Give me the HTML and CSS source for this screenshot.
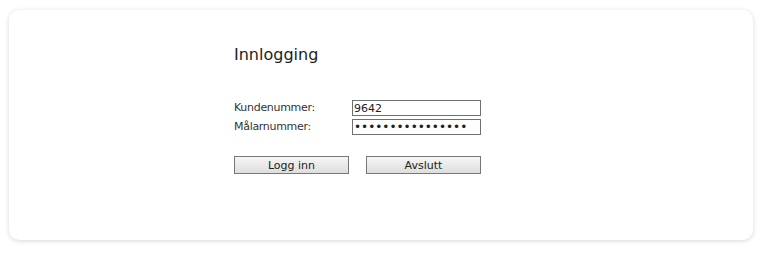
FILE: index.html
```html
<!DOCTYPE html>
<html lang="no">
<head>
<meta charset="utf-8">
<title>Innlogging</title>
<link rel="stylesheet" href="styles.css">
</head>
<body>
<div class="card">
  <div class="login">
    <h1 class="title">Innlogging</h1>
    <div class="fields">
      <label class="label" for="kunde">Kundenummer:</label>
      <input class="field" id="kunde" type="text" value="9642">
      <label class="label" for="maler">Målarnummer:</label>
      <input class="field field-pass" id="maler" type="password" value="1234567890123456">
    </div>
    <div class="buttons">
      <button class="btn" type="button">Logg inn</button>
      <button class="btn" type="button">Avslutt</button>
    </div>
  </div>
</div>
</body>
</html>
```
FILE: styles.css
```css
html, body {
  margin: 0;
  padding: 0;
  background: #ffffff;
}
body {
  padding: 10px 8px 13px 9px;
  font-family: "DejaVu Sans", Verdana, sans-serif;
  color: #222222;
}
.card {
  height: 230px;
  box-sizing: border-box;
  background: #ffffff;
  border-radius: 10px;
  box-shadow: 0 1px 5px rgba(0, 0, 0, 0.16);
  padding: 34px 0 0 225px;
}
.title {
  margin: 0;
  font-size: 16px;
  font-weight: normal;
  line-height: 22px;
  color: #222222;
}
.fields {
  margin-top: 34px;
  display: grid;
  grid-template-columns: 118px 129px;
  row-gap: 3px;
  align-items: center;
}
.label {
  font-size: 11px;
  letter-spacing: -0.3px;
  line-height: 16px;
  color: #333333;
}
.field {
  box-sizing: border-box;
  width: 129px;
  height: 16px;
  margin: 0;
  padding: 0 0 0 1px;
  border: 1px solid #707070;
  font-family: "DejaVu Sans", Verdana, sans-serif;
  font-size: 11px;
  color: #222222;
  background: #ffffff;
  outline: none;
}
.field-pass {
  font-size: 12px;
}
.buttons {
  margin-top: 21px;
  display: flex;
  gap: 17px;
}
.btn {
  box-sizing: border-box;
  width: 115px;
  height: 18px;
  margin: 0;
  padding: 0;
  border: 1px solid #777777;
  background: linear-gradient(#f6f6f6, #dedede);
  font-family: "DejaVu Sans", Verdana, sans-serif;
  font-size: 11px;
  color: #222222;
}
```
